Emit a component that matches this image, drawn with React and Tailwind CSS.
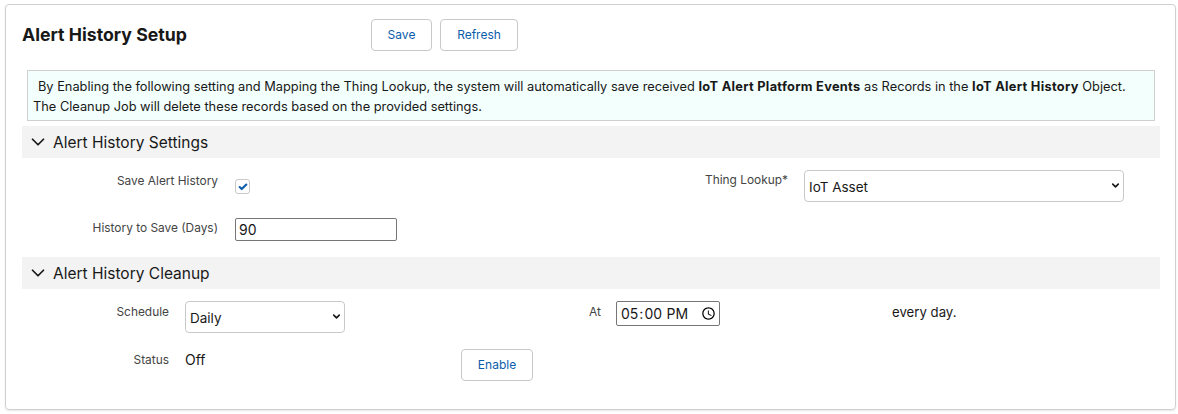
import React from "react";
import { ChevronDown, Check } from "lucide-react";

const Button = ({ children, className }) => (
  <button className={`h-8 rounded border border-[#c9c9c9] bg-white text-xs text-[#0b5cab] ${className}`}>
    {children}
  </button>
);

const SectionHeader = ({ title }) => (
  <div className="flex h-8 items-center bg-[#f3f3f3] pl-[5px]">
    <ChevronDown size={22} strokeWidth={1.9} className="text-[#181818]" />
    <span className="ml-[4px] pt-[1px] text-[15.5px] text-[#181818]">{title}</span>
  </div>
);

const Picklist = ({ value, className }) => (
  <div className={`relative h-8 ${className}`}>
    <select
      defaultValue={value}
      className="h-full w-full appearance-none rounded border border-[#c9c9c9] bg-white pl-1 pt-[2px] text-[13.5px] text-[#181818]"
    >
      <option>{value}</option>
    </select>
    <ChevronDown size={11} strokeWidth={3.5} className="pointer-events-none absolute right-[3px] top-[10px] text-[#181818]" />
  </div>
);

const Label = ({ children, className }) => (
  <div className={`text-right text-[11.9px] text-[#444444] ${className}`}>{children}</div>
);

export default function App() {
  return (
    <div className="h-[414px] bg-white pl-[5px] pt-1 font-['Inter',sans-serif]">
      <div className="h-[406px] w-[1171px] rounded border border-[#d0d0d0] pl-4 pr-[15px] shadow-[0_1px_2px_rgba(0,0,0,0.1)]">
        {/* Header */}
        <div className="flex pt-[14px]">
          <h1 className="w-[349px] pt-1 text-[17.7px] leading-6 font-bold text-[#181818]">Alert History Setup</h1>
          <Button className="w-[61px]">Save</Button>
          <Button className="ml-2 w-[78px]">Refresh</Button>
        </div>

        {/* Info box */}
        <div className="mt-[19px] ml-[5px] mr-[5px] h-[51px] border border-[#d0d0d0] bg-[#f3fffd] px-[5px] pt-[6px] text-[12.8px] leading-5 text-[#181818]">
          <div className="indent-[5px]">
            By Enabling the following setting and Mapping the Thing Lookup, the system will automatically save received{" "}
            <b className="tracking-[0.3px]">IoT Alert Platform Events</b> as Records in the{" "}
            <b className="tracking-[0.3px]">IoT Alert History</b> Object.
          </div>
          <div>The Cleanup Job will delete these records based on the provided settings.</div>
        </div>

        <div className="mt-[5px]">
          <SectionHeader title="Alert History Settings" />
        </div>

        {/* Settings */}
        <div className="flex h-[99px] pt-3">
          <div className="w-[196px]">
            <Label className="pt-[1px] leading-5">Save Alert History</Label>
            <Label className="pt-[27px] leading-5">History to Save (Days)</Label>
          </div>
          <div className="ml-[17px] w-[366px]">
            <div className="mt-[9px] flex h-[15px] w-[15px] items-center justify-center rounded-[3px] border border-[#c9c9c9] bg-white">
              <Check size={10} strokeWidth={5} className="text-[#0b5cab]" />
            </div>
            <input
              readOnly
              value="90"
              className="mt-6 block h-[23px] w-[162px] rounded-[2px] border border-[#767676] px-[3px] text-sm text-[#181818]"
            />
          </div>
          <Label className="w-[187px] leading-5">Thing Lookup*</Label>
          <Picklist value="IoT Asset" className="ml-[16px] w-[320px]" />
        </div>

        <SectionHeader title="Alert History Cleanup" />

        {/* Cleanup */}
        <div className="flex pt-3">
          <div className="w-[147px]">
            <Label className="pt-[1px] leading-5">Schedule</Label>
            <Label className="pt-[28px] leading-5">Status</Label>
          </div>
          <div className="ml-4 w-[276px]">
            <Picklist value="Daily" className="w-[160px]" />
            <div className="mt-[17px] text-sm leading-5 text-[#181818]">Off</div>
          </div>
          <div className="w-[127px] pt-[48px]">
            <Button className="w-[72px]">Enable</Button>
          </div>
          <div className="ml-[1px] w-[27px] pt-[1px] text-xs leading-5 text-[#444444]">At</div>
          <input
            type="time"
            defaultValue="17:00"
            className="h-[25px] w-[104px] rounded-[2px] border border-[#767676] pl-[3px] text-sm text-[#181818]"
          />
          <div className="ml-[172px] pt-[1px] text-[13.2px] leading-5 text-[#181818]">every day.</div>
        </div>
      </div>
    </div>
  );
}
